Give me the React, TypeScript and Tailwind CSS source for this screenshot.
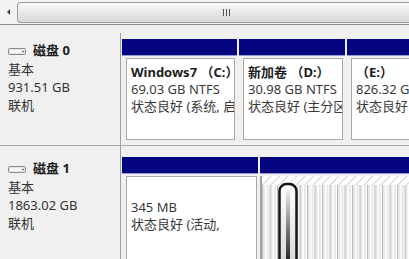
import React from "react";

type PartProps = {
  w: string;
  title?: string;
  size: string;
  status: string;
  bodyPr?: string;
};

const DiskIcon = () => (
  <svg width="18" height="7" viewBox="0 0 18 7" className="shrink-0">
    <rect x="0.5" y="0.5" width="17" height="6" rx="1" fill="#e4e4e4" stroke="#8a8a8a" />
    <rect x="2" y="2" width="11" height="3" fill="#f8f8f8" />
    <rect x="14" y="3" width="2" height="1" fill="#6a6a6a" />
  </svg>
);

const Partition = ({ w, title, size, status, bodyPr = "pr-[2px]" }: PartProps) => (
  <div className={`${w} shrink-0 flex flex-col`}>
    <div className="h-[17px] bg-[#05057f] border-b border-[#9a9ad0]" />
    <div className={`flex-1 pt-[2px] pl-[4px] ${bodyPr} flex flex-col`}>
      <div className="flex-1 border border-[#a8a8a8] bg-white pl-[4px] pt-[5px] overflow-hidden text-[13px] text-[#3a3a3a]">
        <div className="h-[17px] leading-[17px] whitespace-nowrap font-bold text-[#1c1c1c]">{title}</div>
        <div className="h-[17px] leading-[17px] whitespace-nowrap">{size}</div>
        <div className="h-[17px] leading-[17px] whitespace-nowrap">{status}</div>
      </div>
    </div>
  </div>
);

const DiskLabel = ({ name, size, pt }: { name: string; size: string; pt: string }) => (
  <div className={`w-[120px] shrink-0 pl-[8px] ${pt} text-[13px] text-[#333]`}>
    <div className="h-[18px] flex items-center gap-[7px]">
      <DiskIcon />
      <span className="font-bold text-[#1c1c1c]">{name}</span>
    </div>
    <div className="h-[18px] leading-[18px]">基本</div>
    <div className="h-[18px] leading-[18px]">{size}</div>
    <div className="h-[18px] leading-[18px]">联机</div>
  </div>
);

const Hatch = () => (
  <svg width="150" height="90" viewBox="0 0 150 90" className="block">
    <defs>
      <pattern id="diag" width="6" height="6" patternUnits="userSpaceOnUse" patternTransform="rotate(45)">
        <rect width="6" height="6" fill="#ffffff" />
        <line x1="0" y1="0" x2="0" y2="6" stroke="#b4b4b4" strokeWidth="1.2" />
      </pattern>
      <pattern id="vert" width="7.5" height="10" patternUnits="userSpaceOnUse">
        <rect width="7.5" height="10" fill="#ffffff" />
        <rect x="0" width="1" height="10" fill="#b8b8b8" />
        <rect x="1" width="2" height="10" fill="#e6e6e6" />
        <rect x="5" width="1" height="10" fill="#d4d4d4" />
      </pattern>
      <linearGradient id="cap" x1="0" y1="0" x2="0" y2="1">
        <stop offset="0" stopColor="#ffffff" />
        <stop offset="1" stopColor="#d0d0d0" />
      </linearGradient>
      <linearGradient id="core" x1="0" y1="0" x2="0" y2="1">
        <stop offset="0" stopColor="#f0f0f0" />
        <stop offset="0.5" stopColor="#777" />
        <stop offset="1" stopColor="#111" />
      </linearGradient>
    </defs>
    <rect width="150" height="90" fill="url(#vert)" />
    <rect width="150" height="9" fill="url(#diag)" />
    <rect x="17.5" y="8" width="17" height="100" rx="7" fill="url(#cap)" stroke="#151515" strokeWidth="2.5" />
    <rect x="24" y="14" width="4" height="80" fill="url(#core)" />
  </svg>
);

export default function App() {
  return (
    <div className="w-[409px] h-[259px] overflow-hidden bg-[#f0f0f0] flex flex-col font-['Noto_Sans','Noto_Sans_CJK_SC',sans-serif]">
      {/* horizontal scrollbar */}
      <div className="h-[25px] shrink-0 flex bg-[#f3f3f3] border-b border-[#8e8e8e]">
        <div className="w-[17px] shrink-0 flex items-center justify-center">
          <div className="w-0 h-0 border-y-[3px] border-y-transparent border-r-[3px] border-r-[#444]" />
        </div>
        <div className="w-[418px] shrink-0 mt-[2px] h-[21px] rounded-l-[3px] border border-[#9c9c9c] bg-gradient-to-b from-[#f8f8f8] to-[#d8d8d8] flex items-center justify-center">
          <div className="flex gap-[2px]">
            <div className="w-px h-[7px] bg-[#555]" />
            <div className="w-px h-[7px] bg-[#555]" />
            <div className="w-px h-[7px] bg-[#555]" />
          </div>
        </div>
      </div>

      {/* disk 0 */}
      <div className="h-[121px] shrink-0 flex border-b border-[#a8a8a8]">
        <DiskLabel name="磁盘 0" size="931.51 GB" pt="pt-[17px]" />
        <div className="flex-1 mt-[8px] border-l border-[#a0a0a0] pl-[1px] pt-[6px] pb-[5px] flex gap-[2px]">
          <Partition w="w-[115px]" title="Windows7 （C:）" size="69.03 GB NTFS" status="状态良好 (系统, 启动, 页面文件)" />
          <Partition w="w-[106px]" title="新加卷 （D:）" size="30.98 GB NTFS" status="状态良好 (主分区)" />
          <Partition w="w-[110px]" title="（E:）" size="826.32 GB NTFS" status="状态良好 (主分区)" />
        </div>
      </div>

      {/* disk 1 */}
      <div className="flex-1 flex">
        <DiskLabel name="磁盘 1" size="1863.02 GB" pt="pt-[14px]" />
        <div className="flex-1 border-l border-[#a0a0a0] pl-[1px] pt-[11px] flex gap-[2px]">
          <Partition w="w-[136px]" size="345 MB" status="状态良好 (活动," bodyPr="pr-[1px]" />
          <div className="flex-1 flex flex-col">
            <div className="h-[17px] bg-[#05057f] border-b border-[#9a9ad0]" />
            <div className="flex-1 pt-[2px] flex">
              <div className="flex-1 border-l-2 border-[#a2a2a2] overflow-hidden">
                <Hatch />
              </div>
            </div>
          </div>
        </div>
      </div>
    </div>
  );
}
